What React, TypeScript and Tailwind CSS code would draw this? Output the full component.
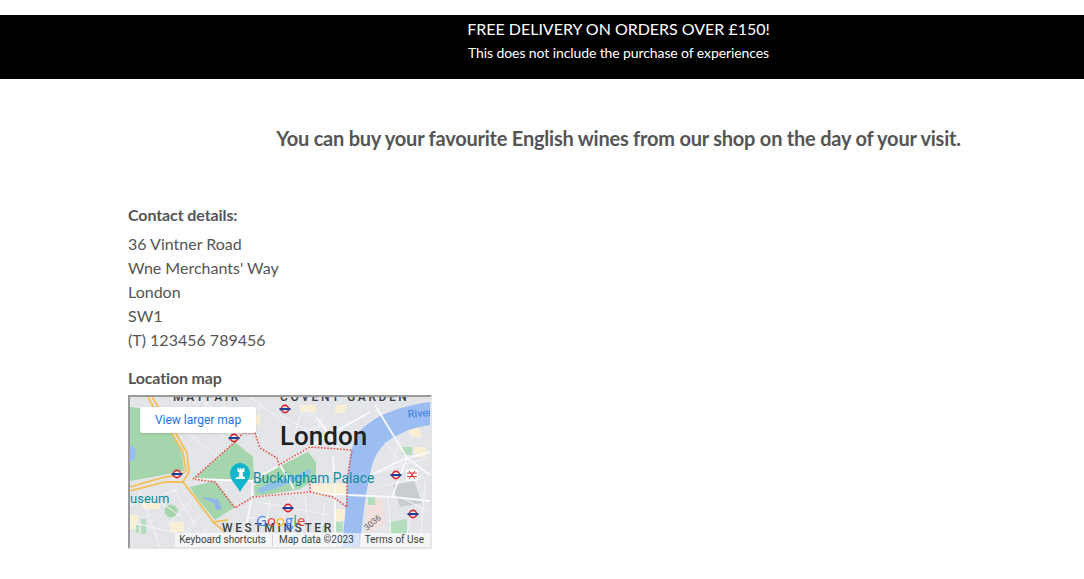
const tubeStops = [
  [155, 12],
  [104, 41],
  [47, 77],
  [158, 111],
  [266, 78],
  [283, 117],
];

function Tube({ x, y }: { x: number; y: number }) {
  return (
    <g>
      <circle cx={x} cy={y} r="3.6" fill="white" stroke="#d8232a" strokeWidth="1.6" />
      <rect x={x - 5.5} y={y - 1} width="11" height="2.2" fill="#1c3f94" />
    </g>
  );
}

function MapDrawing() {
  return (
    <svg viewBox="0 0 300 150" className="block h-full w-full" fontFamily="Roboto, sans-serif">
      <rect width="300" height="150" fill="#e3e5e9" />

      {/* blocks */}
      <path d="M170 8 h16 v7 h-16 Z M207 8 h10 l-3 8 h-10 Z M180 88 L217 86 L217 98 L186 99 Z M205 112 h10 v12 h-10 Z M112 18 h18 v10 h-18 Z M0 118 h8 v14 h-8 Z M12 106 h18 v6 h-18 Z M275 28 h12 l5 12 h-10 Z M284 50 h12 v10 h-12 Z M40 125 h14 v10 h-14 Z" fill="#f8efd4" />
      <path d="M235 105 L251 100 L256 125 L240 136 Z" fill="#f3dfdc" />
      <path d="M263 88 L284 84 L292 106 L270 110 Z" fill="#c9ccd1" />

      {/* parks */}
      <path d="M0 10 L18 12 L42 36 L52 56 L54 74 L0 84 Z" fill="#a5d5ad" />
      <path d="M105 45 L123 60 L124 83 L63 82 Z" fill="#a5d5ad" />
      <path d="M132 78 L148 70 L178 55 L186 65 L186 82 L170 92 L125 100 L124 90 Z" fill="#a5d5ad" />
      <path d="M60 90 L85 84 L105 110 L85 123 L66 100 Z" fill="#a5d5ad" />
      <path d="M11 122 h5 v15 h-5 Z M238 100 h7 v8 h-7 Z M205 125 h8 v10 h-8 Z M260 125 L277 122 L277 137 L260 137 Z M244 40 L252 22 L240 28 L225 44 L220 70 L224 72 Z M6 128 h3 v8 h-3 Z M272 50 h10 v8 h-10 Z M192 128 h5 v8 h-5 Z" fill="#b3ddbc" />
      <circle cx="41" cy="114" r="6.5" fill="#a5d5ad" />

      {/* water */}
      <path
        d="M300 5 C285 7 272 10 260 15 C248 19 242 24 238 27 C228 33 223 45 220 60 C217 80 216 115 212 150 L230 150 C233 115 236 95 241 72 C244 60 250 50 258 44 C268 36 285 30 300 28 Z"
        fill="#9cbdf2"
      />
      <path d="M0 48 L6 52 L5 62 L0 65 Z" fill="#9cbdf2" />
      <path d="M127 94 C135 84 160 82 180 72 L181 76 C170 84 148 90 132 96 Z" fill="#8fc0e8" />
      <path d="M71 100 L88 102 L92 112 L86 113 L84 106 Z" fill="#8fb4e8" />

      {/* minor roads */}
      <g fill="none" stroke="#f4f5f7" strokeWidth="1">
        <path d="M60 10 L100 38 M70 3 L110 28 M80 0 L62 30 M95 8 L75 38 M58 36 L90 62 M110 10 L92 38 M50 10 L95 40" />
        <path d="M120 0 L160 30 M165 0 L190 30 M150 18 L175 32 M130 8 L122 22 M172 15 L165 35 M190 22 L202 40 M165 36 L195 28" />
        <path d="M10 95 L30 150 M0 108 L50 92 M0 125 L55 138 M44 92 L66 130 M62 102 L36 130 M30 105 L52 120 M70 118 L48 146 M80 126 L66 150" />
        <path d="M128 105 L200 118 M140 103 L135 135 M175 98 L180 150 M118 120 L170 128 M160 100 L150 128 M195 105 L190 150" />
        <path d="M255 45 L290 90 M270 100 L300 115 M240 78 L300 60 M248 90 L290 80 M258 100 L262 150 M282 110 L275 150 M295 85 L290 150 M270 40 L262 70" />
      </g>

      {/* main roads */}
      <g fill="none" stroke="#fafafb" strokeWidth="1.8">
        <path d="M63 82 L122 84 L150 68 L180 50 L192 42 L240 15" />
        <path d="M122 100 L180 95 L217 98 L263 100 L300 104" />
        <path d="M203 60 L205 88 L205 150 M122 84 L122 100 L112 150" />
        <path d="M245 8 L277 61 L300 78" />
        <path d="M277 61 L240 78 M277 61 L262 100 M300 55 L277 61" />
        <path d="M150 68 L164 92 M186 20 L208 50" />
      </g>

      {/* yellow roads */}
      <g fill="none" stroke="#f5bf58" strokeWidth="1.8">
        <path d="M0 90 L35 80 L50 78 L56 74 L53 55 L41 35 L30 22 L18 0" />
        <path d="M0 94 L35 85 L53 85 L78 118 L83 125 L98 123" />
        <path d="M22 0 L45 35 L57 56 L59 75 L53 85" />
        <path d="M83 125 L95 135" />
      </g>

      {/* borough boundary */}
      <path
        d="M63 82 L105 45 L113 36 L125 36 L130 51 L147 61 L149 68 L180 50 L222 53 L217 83 L217 110 L203 100 L180 95 L123 100 L105 111 L85 85 L63 82 M180 95 L180 83"
        fill="none"
        stroke="#e8504a"
        strokeWidth="1.6"
        strokeDasharray="1.6 1.6"
      />

      {tubeStops.map(([x, y]) => (
        <Tube key={`${x}-${y}`} x={x} y={y} />
      ))}

      {/* national rail badge */}
      <rect x="276" y="72" width="12" height="12" rx="2" fill="white" />
      <path d="M277 76 h10 M277 79.5 h10 M279 74 l6 8 M285 74 l-6 8" stroke="#d8232a" strokeWidth="0.9" fill="none" />

      {/* labels */}
      <text x="150" y="48" fontSize="26" fontWeight="500" fill="#202124">London</text>
      <text x="43" y="3.5" fontSize="12" fill="#3c4043" letterSpacing="2.6" fontWeight="500">MAYFAIR</text>
      <text x="150" y="3.5" fontSize="12" fill="#3c4043" letterSpacing="2.6" fontWeight="500">COVENT GARDEN</text>
      <text x="278" y="21" fontSize="11" fill="#3f7fd8" transform="rotate(-5 278 21)">River</text>
      <text x="123" y="86" fontSize="13.8" fill="#0f8b9d">Buckingham Palace</text>
      <text x="0" y="106" fontSize="13" fill="#0f8b9d">useum</text>
      <text x="92" y="135" fontSize="12" fontWeight="500" fill="#3c4043" letterSpacing="2.6">WESTMINSTER</text>
      <text x="237" y="134" fontSize="8.5" fill="#5f6368" transform="rotate(-40 237 134)">3036</text>

      {/* palace pin */}
      <path d="M110 95 C106 87 100 84 100 76 A10 10 0 0 1 120 76 C120 84 114 87 110 95 Z" fill="#12b5cb" />
      <path d="M105 82 h10 v-2 h-1.6 l-.8 -5 h1.8 v-4 h-1.6 v1.6 h-1.2 v-1.6 h-1.2 v1.6 h-1.2 v-1.6 h-1.6 v4 h1.8 l-.8 5 h-1.6 Z" fill="white" />

      {/* google logo */}
      <text x="126" y="129" fontSize="15" fontWeight="500" fontFamily="'Open Sans', Roboto, sans-serif">
        <tspan fill="#4285f4">G</tspan>
        <tspan fill="#ea4335">o</tspan>
        <tspan fill="#fbbc05">o</tspan>
        <tspan fill="#4285f4">g</tspan>
        <tspan fill="#34a853">l</tspan>
        <tspan fill="#ea4335">e</tspan>
      </text>
    </svg>
  );
}

export default function App() {
  return (
    <div className="min-h-[579px] bg-white font-['Lato',sans-serif] text-[#555555]">
      <div className="pt-[15px]">
        <div className="flex h-16 flex-col items-center bg-black pt-[5px] pl-[153px] text-white">
          <p className="text-base leading-[18px] tracking-[-0.02px]">FREE DELIVERY ON ORDERS OVER £150!</p>
          <p className="mt-1.5 text-sm leading-[18px] tracking-[-0.1px]">This does not include the purchase of experiences</p>
        </div>
      </div>

      <h2 className="mt-[46px] pl-[153px] text-center text-xl leading-[26px] font-bold tracking-[-0.225px]">
        You can buy your favourite English wines from our shop on the day of your visit.
      </h2>

      <div className="mt-[52px] pl-[128px]">
        <p className="text-base leading-6 font-bold tracking-[-0.1px]">Contact details:</p>
        <div className="mt-[5px] text-base leading-6">
          <p>36 Vintner Road</p>
          <p>Wne Merchants' Way</p>
          <p>London</p>
          <p>SW1</p>
          <p>(T) 123456 789456</p>
        </div>
        <p className="mt-[14px] text-base leading-6 font-bold tracking-[-0.15px]">Location map</p>

        <div className="relative mt-[5px] h-[154px] w-[304px] border-2 border-t-[#9a9a9a] border-r-[#e4e4e4] border-b-[#e4e4e4] border-l-[#9a9a9a]">
          <MapDrawing />
          <div className="absolute top-[10px] left-[10px] flex h-[26px] w-[116px] items-center justify-center rounded-[2px] bg-white font-['Roboto',sans-serif] text-xs text-[#1a73e8] shadow-sm">
            View larger map
          </div>
          <div className="absolute right-0 bottom-0 flex h-[14px] w-[255px] items-center justify-end bg-white/60 pr-[6px] font-['Roboto',sans-serif] text-[10px] leading-none text-[#3c4043]">
            <span>Keyboard shortcuts</span>
            <span className="mx-[6px] h-3 w-px bg-[#d5d5d5]" />
            <span>Map data ©2023</span>
            <span className="mx-[5px] h-3 w-px bg-[#d5d5d5]" />
            <span>Terms of Use</span>
          </div>
        </div>
      </div>
    </div>
  );
}
